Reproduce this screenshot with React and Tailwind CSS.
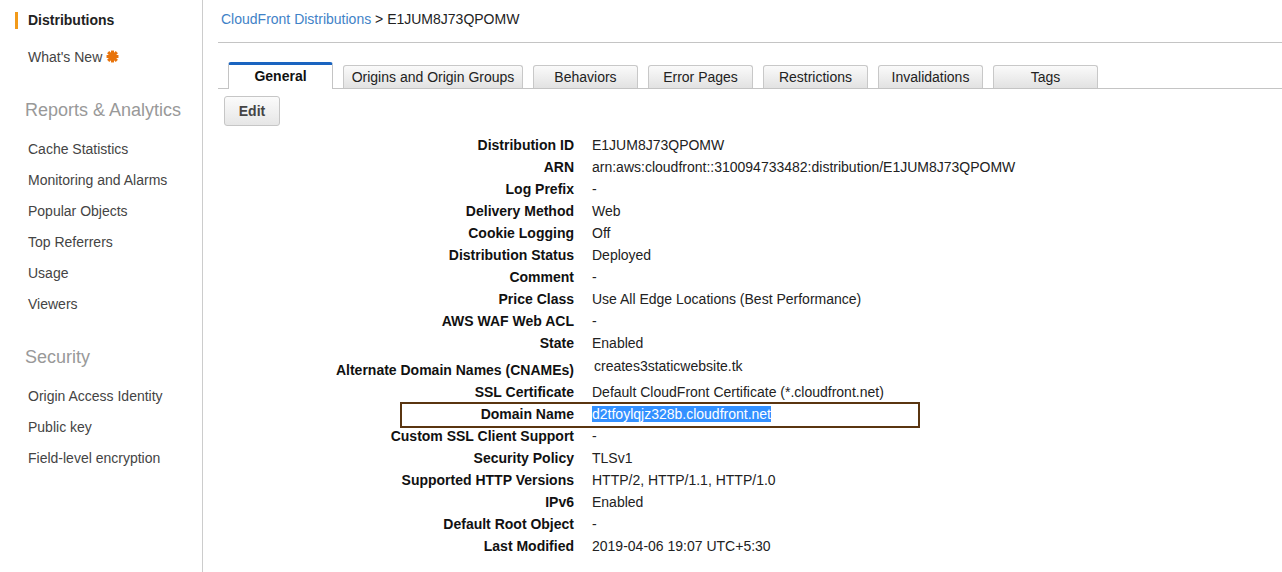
import React from "react"

const REPORTS = ["Cache Statistics", "Monitoring and Alarms", "Popular Objects", "Top Referrers", "Usage", "Viewers"]
const SECURITY = ["Origin Access Identity", "Public key", "Field-level encryption"]

const TABS = [
  { label: "General", w: "w-[105px]", active: true },
  { label: "Origins and Origin Groups", w: "w-[180px]" },
  { label: "Behaviors", w: "w-[105px]" },
  { label: "Error Pages", w: "w-[105px]" },
  { label: "Restrictions", w: "w-[105px]" },
  { label: "Invalidations", w: "w-[105px]" },
  { label: "Tags", w: "w-[105px]" }
]

const ROWS = [
  ["Distribution ID", "E1JUM8J73QPOMW"],
  ["ARN", "arn:aws:cloudfront::310094733482:distribution/E1JUM8J73QPOMW"],
  ["Log Prefix", "-"],
  ["Delivery Method", "Web"],
  ["Cookie Logging", "Off"],
  ["Distribution Status", "Deployed"],
  ["Comment", "-"],
  ["Price Class", "Use All Edge Locations (Best Performance)"],
  ["AWS WAF Web ACL", "-"],
  ["State", "Enabled"],
  ["Alternate Domain Names (CNAMEs)", "creates3staticwebsite.tk", "cname"],
  ["SSL Certificate", "Default CloudFront Certificate (*.cloudfront.net)"],
  ["Domain Name", "d2tfoylqjz328b.cloudfront.net", "domain"],
  ["Custom SSL Client Support", "-"],
  ["Security Policy", "TLSv1"],
  ["Supported HTTP Versions", "HTTP/2, HTTP/1.1, HTTP/1.0"],
  ["IPv6", "Enabled"],
  ["Default Root Object", "-"],
  ["Last Modified", "2019-04-06 19:07 UTC+5:30"]
]

function Asterisk() {
  return (
    <svg width="13" height="13" viewBox="0 0 12 12" className="inline-block ml-[4px] -mt-[3px] align-middle">
      <g stroke="#e8740c" strokeWidth="2.8" strokeLinecap="butt">
        <line x1="6" y1="0.5" x2="6" y2="11.5" />
        <line x1="0.5" y1="6" x2="11.5" y2="6" />
        <line x1="2" y1="2" x2="10" y2="10" />
        <line x1="10" y1="2" x2="2" y2="10" />
      </g>
    </svg>
  )
}

function Sidebar() {
  return (
    <div className="w-[203px] shrink-0 border-r border-[#cccccc] min-h-[572px] pt-[12px] text-[14px] text-[#444444]">
      <div className="ml-[15px] border-l-[3px] border-[#f29a1a] pl-[10px] h-[17px] leading-[16px] font-bold text-[#222222]">
        Distributions
      </div>
      <div className="mt-[20px] pl-[28px] leading-[16px]">
        What's New
        <Asterisk />
      </div>
      <div className="mt-[34px] pl-[25px] text-[18px] leading-[22px] text-[#999999]">Reports &amp; Analytics</div>
      <div className="mt-[20px] flex flex-col gap-[15px] pl-[28px]">
        {REPORTS.map((r) => (
          <div key={r} className="leading-[16px]">{r}</div>
        ))}
      </div>
      <div className="mt-[34px] pl-[25px] text-[18px] leading-[22px] text-[#999999]">Security</div>
      <div className="mt-[20px] flex flex-col gap-[15px] pl-[28px]">
        {SECURITY.map((r) => (
          <div key={r} className="leading-[16px]">{r}</div>
        ))}
      </div>
    </div>
  )
}

function Tabs() {
  return (
    <div className="mt-[18px] flex items-end gap-[10px] border-b border-[#c4c4c4] pl-[10px] h-[27px] box-content">
      {TABS.map((t) =>
        t.active ? (
          <div
            key={t.label}
            className={`${t.w} h-[27px] -mb-px bg-white border-x border-[#c4c4c4] border-t-[3px] border-t-[#1a64c0] rounded-t-[3px] flex items-center justify-center font-bold text-[#111111] pb-[1px]`}
          >
            {t.label}
          </div>
        ) : (
          <div
            key={t.label}
            className={`${t.w} h-[23px] border border-b-0 border-[#c8c8c8] rounded-t-[3px] bg-gradient-to-b from-[#fafafa] to-[#e2e2e2] flex items-center justify-center text-[#222222]`}
          >
            {t.label}
          </div>
        )
      )}
    </div>
  )
}

function Row({ label, value, kind }) {
  if (kind === "cname") {
    return (
      <div className="flex h-[27px]">
        <div className="w-[356px] text-right font-bold text-[#111111] pt-[8px] leading-[16px]">{label}</div>
        <div className="ml-[20px] pt-[4px] leading-[16px] text-[#222222]">{value}</div>
      </div>
    )
  }
  return (
    <div className="relative flex h-[22px] items-center leading-[16px]">
      <div className="w-[356px] text-right font-bold text-[#111111]">{label}</div>
      <div className="ml-[18px] text-[#222222]">
        {kind === "domain" ? <span className="bg-[#3390ff] text-white">{value}</span> : value}
      </div>
      {kind === "domain" && (
        <div className="absolute left-[182px] top-[-1px] w-[520px] h-[26px] border-2 border-[#5a3510] pointer-events-none" />
      )}
    </div>
  )
}

export default function App() {
  return (
    <div className="flex w-[1282px] h-[572px] overflow-hidden bg-white font-['Liberation_Sans',Arial,sans-serif] text-[14px]">
      <Sidebar />
      <div className="flex-1 pl-[15px]">
        <div className="h-[43px] border-b border-[#c4c4c4] pl-[3px] pt-[11px] leading-[16px]">
          <span className="text-[#3f82c7]">CloudFront Distributions</span>
          <span className="text-[#222222]"> &gt; E1JUM8J73QPOMW</span>
        </div>
        <Tabs />
        <button className="mt-[7px] ml-[6px] w-[56px] h-[30px] rounded-[3px] border border-[#c6c6c6] bg-gradient-to-b from-[#fbfbfb] to-[#e6e6e6] font-bold text-[#444444] leading-[16px]">
          Edit
        </button>
        <div className="mt-[8px]">
          {ROWS.map(([l, v, k]) => (
            <Row key={l} label={l} value={v} kind={k} />
          ))}
        </div>
      </div>
    </div>
  )
}
